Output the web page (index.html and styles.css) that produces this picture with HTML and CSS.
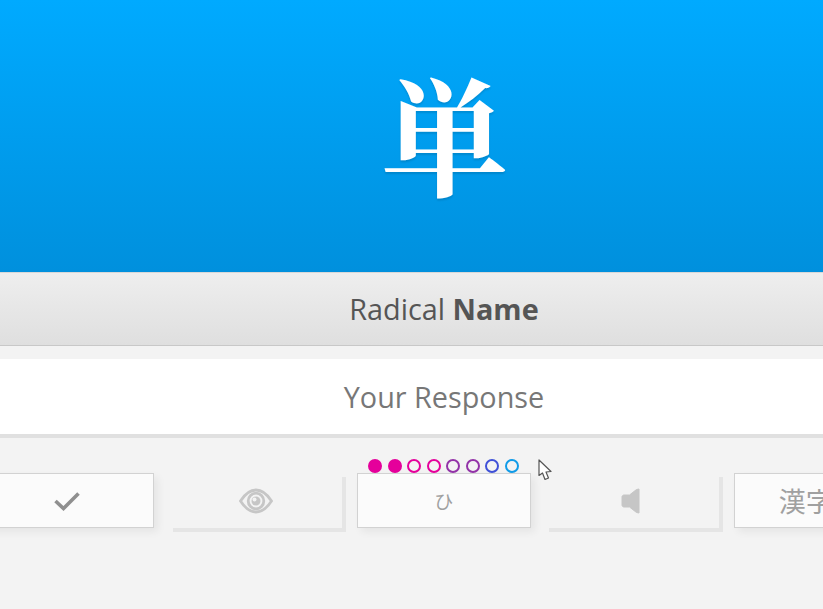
FILE: index.html
```html
<!DOCTYPE html>
<html>
<head>
    <title>Radical Name</title>
    <link rel="stylesheet" href="styles.css">
</head>
<body>
    <div class="character"><span lang="ja">単</span></div>
    <div class="prompt">Radical <b>Name</b></div>
    <div class="response">Your Response</div>
    <div class="toolbar">
        <div class="dots">
            <i class="dot done c1"></i>
            <i class="dot done c1"></i>
            <i class="dot c1"></i>
            <i class="dot c1"></i>
            <i class="dot c2"></i>
            <i class="dot c2"></i>
            <i class="dot c3"></i>
            <i class="dot c4"></i>
        </div>
        <div class="buttons">
            <div class="btn">
                <svg width="28" height="22" viewBox="0 0 28 22"><path d="M2.500 11l8 7.500L25.500 3.500" fill="none" stroke="#8f8f8f" stroke-width="3.600"/></svg>
            </div>
            <div class="btn off">
                <svg width="34" height="26" viewBox="0 0 34 26"><path d="M1.500 13C6 6 11 2 17 2S28 6 32.500 13C28 20 23 24 17 24S6 20 1.500 13z" fill="none" stroke="#c6c6c6" stroke-width="2.800"/><circle cx="17" cy="13" r="7.800" fill="none" stroke="#c6c6c6" stroke-width="2.800"/><circle cx="17" cy="13" r="4.500" fill="#c6c6c6"/><circle cx="15.500" cy="11.500" r="2" fill="#f3f3f3"/></svg>
            </div>
            <div class="btn kana" lang="ja">ひ</div>
            <div class="btn off">
                <svg class="speaker" width="20" height="26" viewBox="0 0 20 26"><path d="M18 1V25L15.500 24.500L8.500 19H3C1.800 19 1 18 1 17V9C1 8 1.800 7 3 7H8.500L15.500 1.500z" fill="#c6c6c6" stroke="#c6c6c6" stroke-linejoin="round"/></svg>
            </div>
            <div class="btn kanji" lang="ja">漢字</div>
        </div>
    </div>
    <svg class="cursor" width="15" height="22" viewBox="0 0 15 22"><path d="M1 1V16.500L4.500 14L7 20.500L10.500 19L8 13L13 12.500z" fill="#fff" stroke="#555" stroke-width="1.200" stroke-linejoin="round"/></svg>
</body>
</html>
```

FILE: styles.css
```css
html, body {
    margin: 0;
    height: 100%;
    overflow: hidden;
}
body {
    font-family: "Open Sans", sans-serif;
    background-color: #f3f3f3;
    position: relative;
}
.character {
    height: 272px;
    overflow: hidden;
    background: linear-gradient(to bottom, #00aaff, #0090dd);
    color: white;
    font-family: "Liberation Serif", "Noto Serif CJK JP", serif;
    font-weight: 700;
    font-size: 128px;
    line-height: 271px;
    text-align: center;
    padding: 9px 0 0 67px;
    box-sizing: border-box;
    text-shadow: 0 2px 2px rgba(0, 0, 0, 0.12);
}
.prompt {
    height: 74px;
    box-sizing: border-box;
    background: linear-gradient(to bottom, #eeeeee, #dfdfdf);
    border-top: 1px solid #d8d8d8;
    border-bottom: 1px solid #c8c8c8;
    color: #555;
    font-size: 28.8px;
    line-height: 72px;
    text-align: center;
    padding-left: 65px;
}
.response {
    margin-top: 13px;
    height: 79px;
    box-sizing: border-box;
    background-color: white;
    border-bottom: 4px solid #e0e0e0;
    color: #777;
    font-size: 28.8px;
    line-height: 76px;
    text-align: center;
    padding-left: 65px;
}
.toolbar {
    padding-top: 21px;
}
.dots {
    display: flex;
    justify-content: center;
    gap: 5.6px;
    padding-left: 64px;
}
.dot {
    width: 14px;
    height: 14px;
    box-sizing: border-box;
    border-radius: 50%;
    border: 2px solid;
}
.c1 { border-color: #e5009b; }
.c2 { border-color: #9333a8; }
.c3 { border-color: #3f51d8; }
.c4 { border-color: #109be8; }
.done { background-color: #e5009b; }
.buttons {
    display: flex;
    gap: 14.900px;
    margin-left: -19.400px;
    width: 940px;
}
.btn {
    flex: none;
    width: 173.400px;
    height: 55px;
    box-sizing: border-box;
    background-color: #fbfbfb;
    border: 1px solid #d2d2d2;
    box-shadow: 4px 4px 8px rgba(0, 0, 0, 0.06);
    display: flex;
    align-items: center;
    justify-content: center;
    color: #a0a0a0;
    font-family: "Noto Sans CJK JP", sans-serif;
}
.off {
    background-color: #f3f3f3;
    border: none;
    box-shadow: 4px 4px 0 #e5e5e5;
}
.speaker {
    margin-right: 2px;
}
.kana { font-size: 19px; }
.kanji {
    font-size: 27px;
    justify-content: flex-start;
    padding-left: 44px;
}
.cursor {
    position: absolute;
    left: 538px;
    top: 459px;
}
```
